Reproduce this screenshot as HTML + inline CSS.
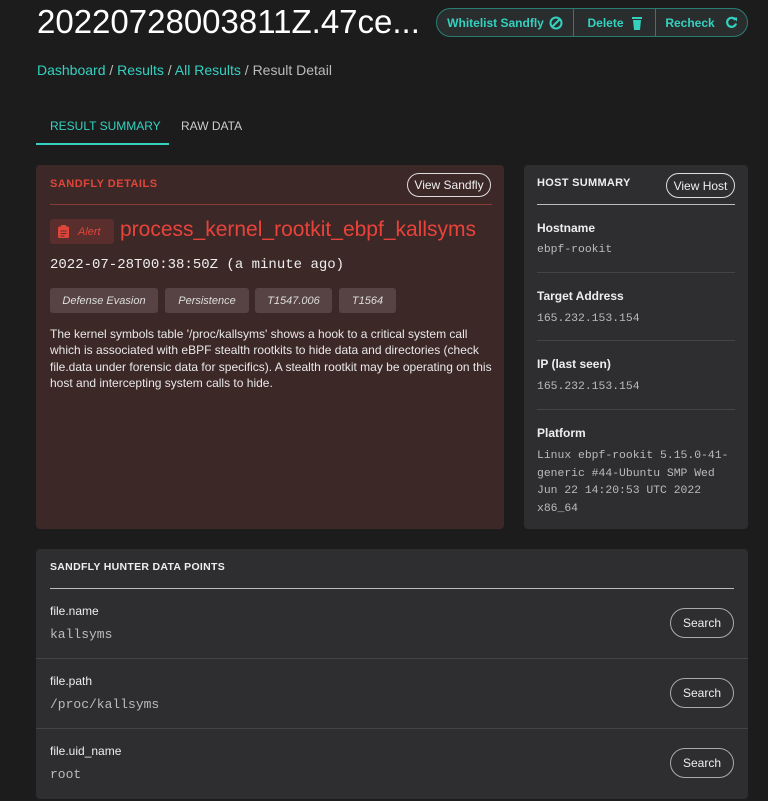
<!DOCTYPE html>
<html><head><style>
*{box-sizing:border-box;margin:0;padding:0}
body{width:768px;height:801px;background:#1c1c1d;font-family:"Liberation Sans",sans-serif;color:#e8e8e8;position:relative;overflow:hidden}
.a{position:absolute}
.mono{font-family:"Liberation Mono",monospace}
.teal{color:#34d1bf}
.pill{position:absolute;border:1.5px solid #ddd;border-radius:14px;font-size:12px;color:#eee;display:flex;align-items:center;justify-content:center}
.lbl{font-size:12px;font-weight:bold;color:#eee}
.val{font-size:11.4px;color:#bbb;font-family:"Liberation Mono",monospace}
.tag{position:absolute;top:288px;height:25px;background:#574344;border-radius:3px;font-size:11px;font-style:italic;color:#ddd;display:flex;align-items:center;justify-content:center}
</style></head><body>
<div class="a" style="left:37px;top:3px;font-size:33px;color:#fff">20220728003811Z.47ce...</div>
<div class="a" style="left:436px;top:8px;width:312px;height:29px;border:1.5px solid #2a7d72;border-radius:15px;background:#2a2d2e;display:flex;font-size:12px;color:#34d1bf;font-weight:bold">
<div style="width:137px;display:flex;align-items:center;justify-content:center;border-right:1.5px solid #2a7d72">Whitelist Sandfly <svg width="14" height="14" viewBox="0 0 14 14" style="margin-left:5px"><circle cx="7" cy="7" r="5.5" fill="none" stroke="#34d1bf" stroke-width="2"/><path d="M3 11L11 3" stroke="#34d1bf" stroke-width="2"/></svg></div>
<div style="width:82px;display:flex;align-items:center;justify-content:center;border-right:1.5px solid #2a7d72">Delete <svg width="10" height="14" viewBox="0 0 10 14" style="margin-left:8px"><rect x="0" y="1" width="10" height="2" fill="#34d1bf"/><path d="M1 4h8l-1 10H2z" fill="#34d1bf"/></svg></div>
<div style="flex:1;display:flex;align-items:center;justify-content:center">Recheck <svg width="13" height="13" viewBox="0 0 13 13" style="margin-left:10px"><path d="M10.5 4A4.5 4.5 0 1 0 11 7.5" fill="none" stroke="#34d1bf" stroke-width="2.2"/><path d="M8 1.5h4v4z" fill="#34d1bf"/></svg></div>
</div>
<div class="a" style="left:37px;top:62px;font-size:14px;color:#bbb"><span class="teal">Dashboard</span> / <span class="teal">Results</span> / <span class="teal">All Results</span> / Result Detail</div>
<div class="a teal" style="left:50px;top:119px;font-size:12px">RESULT SUMMARY</div>
<div class="a" style="left:181px;top:119px;font-size:12px;color:#ccc">RAW DATA</div>
<div class="a" style="left:36px;top:143px;width:133px;height:2px;background:#34d1bf"></div>

<div class="a" style="left:36px;top:165px;width:468px;height:364px;background:#3d2828;border-radius:4px"></div>
<div class="a" style="left:50px;top:178px;font-size:11px;font-weight:bold;color:#e0453a;letter-spacing:.5px">SANDFLY DETAILS</div>
<div class="pill" style="left:407px;top:173px;width:84px;height:24px">View Sandfly</div>
<div class="a" style="left:50px;top:204px;width:442px;height:1px;background:#8a3a34"></div>
<div class="a" style="left:50px;top:219px;width:64px;height:25px;background:#5a2e2c;border-radius:3px;font-size:11px;font-style:italic;color:#e0453a;display:flex;align-items:center;padding-left:8px"><svg width="11" height="13" viewBox="0 0 11 13"><rect x="0" y="1.5" width="11" height="11.5" rx="1.5" fill="#e0453a"/><rect x="3" y="0" width="5" height="3" fill="#e0453a"/><path d="M2.5 6h6M2.5 8.5h6M2.5 11h4" stroke="#5a2e2c" stroke-width="1"/></svg><span style="margin-left:9px">Alert</span></div>
<div class="a" style="left:120px;top:218px;font-size:21px;color:#e8433a">process_kernel_rootkit_ebpf_kallsyms</div>
<div class="a mono" style="left:50px;top:257px;font-size:14px;color:#eee">2022-07-28T00:38:50Z (a minute ago)</div>
<div class="tag" style="left:50px;width:108px">Defense Evasion</div>
<div class="tag" style="left:165px;width:84px">Persistence</div>
<div class="tag" style="left:255px;width:77px">T1547.006</div>
<div class="tag" style="left:339px;width:57px">T1564</div>
<div class="a" style="left:50px;top:326px;width:442px;font-size:12px;line-height:16.3px;color:#e8e8e8">The kernel symbols table '/proc/kallsyms' shows a hook to a critical system call which is associated with eBPF stealth rootkits to hide data and directories (check file.data under forensic data for specifics). A stealth rootkit may be operating on this host and intercepting system calls to hide.</div>

<div class="a" style="left:524px;top:165px;width:224px;height:364px;background:#2e2e31;border-radius:4px"></div>
<div class="a" style="left:537px;top:177px;font-size:11px;font-weight:bold;color:#eee;letter-spacing:.3px">HOST SUMMARY</div>
<div class="pill" style="left:666px;top:173px;width:69px;height:25px">View Host</div>
<div class="a" style="left:537px;top:204px;width:198px;height:1px;background:#bbb"></div>
<div class="a lbl" style="left:537px;top:221px">Hostname</div><div class="a val" style="left:537px;top:244px">ebpf-rookit</div>
<div class="a" style="left:537px;top:272px;width:198px;height:1px;background:#444"></div>
<div class="a lbl" style="left:537px;top:289px">Target Address</div><div class="a val" style="left:537px;top:313px">165.232.153.154</div>
<div class="a" style="left:537px;top:340px;width:198px;height:1px;background:#444"></div>
<div class="a lbl" style="left:537px;top:357px">IP (last seen)</div><div class="a val" style="left:537px;top:381px">165.232.153.154</div>
<div class="a" style="left:537px;top:409px;width:198px;height:1px;background:#444"></div>
<div class="a lbl" style="left:537px;top:426px">Platform</div><div class="a val" style="left:537px;top:448px;width:205px;line-height:17.6px">Linux ebpf-rookit 5.15.0-41-<br>generic #44-Ubuntu SMP Wed<br>Jun 22 14:20:53 UTC 2022<br>x86_64</div>

<div class="a" style="left:36px;top:549px;width:712px;height:250px;background:#2e2e31;border-radius:4px"></div>
<div class="a" style="left:50px;top:561px;font-size:10.5px;font-weight:bold;color:#eee;letter-spacing:.3px">SANDFLY HUNTER DATA POINTS</div>
<div class="a" style="left:50px;top:588px;width:684px;height:1px;background:#bbb"></div>
<div class="a lbl" style="left:50px;top:604px;font-weight:normal">file.name</div><div class="a val" style="left:50px;top:627px;font-size:13px">kallsyms</div>
<div class="pill" style="left:670px;top:608px;width:64px;height:30px;border-radius:15px;border-color:#aaa">Search</div>
<div class="a" style="left:36px;top:658px;width:712px;height:1px;background:#444"></div>
<div class="a lbl" style="left:50px;top:674px;font-weight:normal">file.path</div><div class="a val" style="left:50px;top:697px;font-size:13px">/proc/kallsyms</div>
<div class="pill" style="left:670px;top:678px;width:64px;height:30px;border-radius:15px;border-color:#aaa">Search</div>
<div class="a" style="left:36px;top:728px;width:712px;height:1px;background:#444"></div>
<div class="a lbl" style="left:50px;top:744px;font-weight:normal">file.uid_name</div><div class="a val" style="left:50px;top:767px;font-size:13px">root</div>
<div class="pill" style="left:670px;top:748px;width:64px;height:30px;border-radius:15px;border-color:#aaa">Search</div>
</body></html>
